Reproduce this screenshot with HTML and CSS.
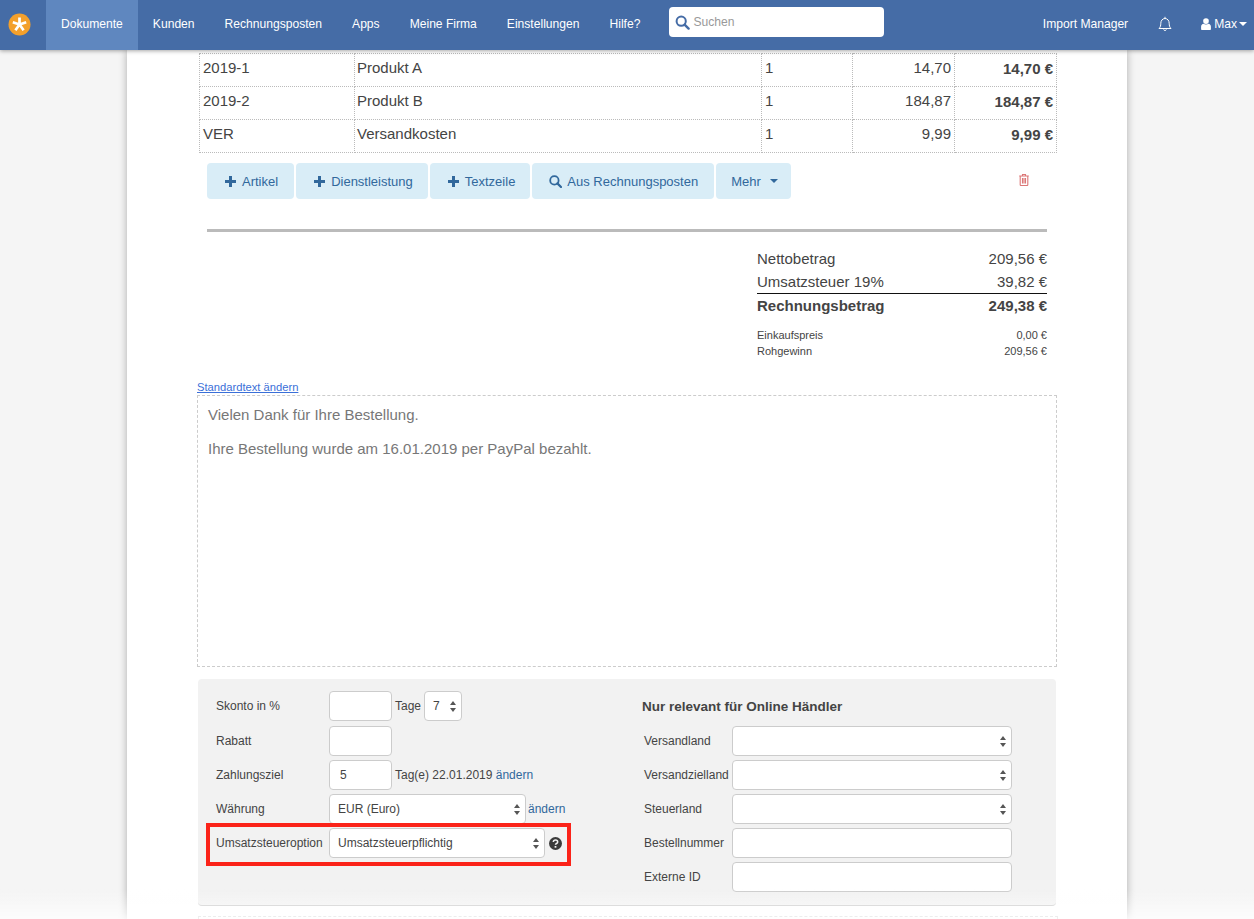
FILE: index.html
```html
<!DOCTYPE html>
<html lang="de">
<head>
    <meta charset="UTF-8">
    <title>Rechnung bearbeiten</title>
    <link rel="stylesheet" href="styles.css">
</head>
<body>

    <!-- Top navigation -->
    <nav class="navbar">
        <a class="logo" href="#">
            <svg width="23" height="23" viewBox="0 0 23 23">
                <circle cx="11.500" cy="11.500" r="11" fill="#f3a02c"/>
                <path d="M11.500 11.500V4.500M11.500 11.500L4.800 9.300M11.500 11.500L18.200 9.300M11.500 11.500L7.400 17.200M11.500 11.500L15.600 17.200" stroke="#fff" stroke-width="2.700" fill="none"/>
            </svg>
        </a>
        <a class="nav-item active" href="#">Dokumente</a>
        <a class="nav-item" href="#">Kunden</a>
        <a class="nav-item" href="#">Rechnungsposten</a>
        <a class="nav-item" href="#">Apps</a>
        <a class="nav-item" href="#">Meine Firma</a>
        <a class="nav-item" href="#">Einstellungen</a>
        <a class="nav-item" href="#">Hilfe?</a>
        <div class="search">
            <svg width="15" height="15" viewBox="0 0 15 15">
                <circle cx="6.200" cy="6.200" r="4.600" stroke="#456ca6" stroke-width="2" fill="none"/>
                <path d="M9.600 9.600l4 4" stroke="#456ca6" stroke-width="2.400" stroke-linecap="round"/>
            </svg>
            <span>Suchen</span>
        </div>
        <div class="nav-right">
            <a class="nav-link" href="#">Import Manager</a>
            <a class="nav-bell" href="#">
                <svg width="14" height="16" viewBox="0 0 14 16">
                    <path d="M1 12.500c1.400-1.300 1.800-3 1.800-5.200C2.800 4.600 4.600 2.500 7 2.500s4.200 2.100 4.200 4.800c0 2.200.4 3.900 1.800 5.200z" stroke="#fff" fill="none"/>
                    <path d="M5.600 13.500a1.500 1.500 0 0 0 2.800 0M7 .8v1.700" stroke="#fff" fill="none"/>
                </svg>
            </a>
            <a class="nav-user" href="#">
                <svg width="10" height="12" viewBox="0 0 9 11">
                    <circle cx="4.500" cy="2.800" r="2.600" fill="#fff"/>
                    <path d="M0 10.300V8c0-1.600 1-2.500 2.200-2.700.6.500 1.400.7 2.300.7s1.700-.2 2.300-.7C8 5.500 9 6.400 9 8v2.300c0 .4-.3.7-.7.7H.7c-.4 0-.7-.3-.7-.7z" fill="#fff"/>
                </svg>
                Max<span class="caret"></span>
            </a>
        </div>
    </nav>

    <div class="page">

        <!-- Line items -->
        <table class="items">
            <colgroup>
                <col class="col-number">
                <col class="col-name">
                <col class="col-qty">
                <col class="col-price">
                <col class="col-total">
            </colgroup>
            <tbody>
                <tr>
                    <td>2019-1</td>
                    <td class="name">Produkt A</td>
                    <td>1</td>
                    <td class="num">14,70</td>
                    <td class="num total">14,70 €</td>
                </tr>
                <tr>
                    <td>2019-2</td>
                    <td class="name">Produkt B</td>
                    <td>1</td>
                    <td class="num">184,87</td>
                    <td class="num total">184,87 €</td>
                </tr>
                <tr>
                    <td>VER</td>
                    <td class="name">Versandkosten</td>
                    <td>1</td>
                    <td class="num">9,99</td>
                    <td class="num total">9,99 €</td>
                </tr>
            </tbody>
        </table>

        <div class="toolbar">
            <button class="btn btn-first">
                <svg width="11" height="11" viewBox="0 0 11 11"><path d="M5.500 0v11M0 5.500h11" stroke="#31689c" stroke-width="3"/></svg>
                Artikel
            </button>
            <button class="btn">
                <svg width="11" height="11" viewBox="0 0 11 11"><path d="M5.500 0v11M0 5.500h11" stroke="#31689c" stroke-width="3"/></svg>
                Dienstleistung
            </button>
            <button class="btn">
                <svg width="11" height="11" viewBox="0 0 11 11"><path d="M5.500 0v11M0 5.500h11" stroke="#31689c" stroke-width="3"/></svg>
                Textzeile
            </button>
            <button class="btn btn-search">
                <svg width="13" height="13" viewBox="0 0 13 13">
                    <circle cx="5.400" cy="5.400" r="4.200" stroke="#31689c" stroke-width="1.800" fill="none"/>
                    <path d="M8.400 8.400l3.600 3.600" stroke="#31689c" stroke-width="2.200" stroke-linecap="round"/>
                </svg>
                Aus Rechnungsposten
            </button>
            <button class="btn btn-more">Mehr <span class="caret caret-blue"></span></button>
            <svg class="trash" width="10" height="12" viewBox="0 0 10 12">
                <path d="M3.500 1.500V.5h3v1M.2 2h9.600M1.200 2v8.800c0 .4.300.7.700.7h6.200c.4 0 .7-.3.700-.7V2M3.500 4v5.500M5 4v5.500M6.500 4v5.500" stroke="#dc7777" stroke-width="1.100" fill="none"/>
            </svg>
        </div>

        <hr class="rule">

        <!-- Totals -->
        <div class="totals">
            <div class="total-row"><span>Nettobetrag</span><span>209,56 €</span></div>
            <div class="total-row tax"><span>Umsatzsteuer 19%</span><span>39,82 €</span></div>
            <div class="total-row grand"><span>Rechnungsbetrag</span><span>249,38 €</span></div>
            <div class="total-row small first"><span>Einkaufspreis</span><span>0,00 €</span></div>
            <div class="total-row small"><span>Rohgewinn</span><span>209,56 €</span></div>
        </div>

        <a class="text-link" href="#">Standardtext ändern</a>
        <div class="text-box">
            <p>Vielen Dank für Ihre Bestellung.</p>
            <p>Ihre Bestellung wurde am 16.01.2019 per PayPal bezahlt.</p>
        </div>

        <!-- Options panel -->
        <div class="panel">
            <div class="panel-left">
                <div class="form-row first">
                    <label>Skonto in %</label>
                    <input type="text" class="short">
                    <span class="after">Tage</span>
                    <select class="tiny"><option>7</option></select>
                </div>
                <div class="form-row">
                    <label>Rabatt</label>
                    <input type="text" class="short">
                </div>
                <div class="form-row">
                    <label>Zahlungsziel</label>
                    <input type="text" class="short" value="5">
                    <span class="after">Tag(e) 22.01.2019 <a href="#">ändern</a></span>
                </div>
                <div class="form-row">
                    <label>Währung</label>
                    <select class="medium"><option>EUR (Euro)</option></select>
                    <a class="after-link" href="#">ändern</a>
                </div>
                <div class="form-row marked">
                    <label>Umsatzsteueroption</label>
                    <select class="wide"><option>Umsatzsteuerpflichtig</option></select>
                    <svg class="help" width="13" height="13" viewBox="0 0 13 13">
                        <circle cx="6.500" cy="6.500" r="6.500" fill="#3a3a3a"/>
                        <path d="M4.300 5c.1-1.300 1-1.900 2.200-1.900s2.200.7 2.200 1.800c0 1.700-2.200 1.500-2.200 2.900" stroke="#f2f2f2" stroke-width="1.500" fill="none"/>
                        <rect x="5.600" y="9" width="1.800" height="1.700" fill="#f2f2f2"/>
                    </svg>
                </div>
            </div>
            <div class="panel-right">
                <h3>Nur relevant für Online Händler</h3>
                <div class="form-row">
                    <label>Versandland</label>
                    <select class="full"><option></option></select>
                </div>
                <div class="form-row">
                    <label>Versandzielland</label>
                    <select class="full"><option></option></select>
                </div>
                <div class="form-row">
                    <label>Steuerland</label>
                    <select class="full"><option></option></select>
                </div>
                <div class="form-row">
                    <label>Bestellnummer</label>
                    <input type="text" class="full">
                </div>
                <div class="form-row">
                    <label>Externe ID</label>
                    <input type="text" class="full">
                </div>
            </div>
        </div>

        <div class="next-box"></div>
    </div>

    <div class="bottom-fade"></div>

</body>
</html>
```

FILE: styles.css
```css
html, body {
    height: 100%;
    overflow: hidden;
}
body {
    font-family: "Liberation Sans", Arial, sans-serif;
    font-size: 14px;
    background-color: #f5f5f5;
    color: #444;
    margin: 0;
}
a {
    color: #31689c;
    text-decoration: none;
}

/* Navbar */
.navbar {
    position: relative;
    z-index: 2;
    display: flex;
    align-items: stretch;
    height: 50px;
    background-color: #456ca6;
    box-shadow: 0 1px 4px rgba(0, 0, 0, 0.35);
    font-size: 12.1px;
}
.navbar a {
    color: #fff;
}
.logo {
    display: flex;
    align-items: center;
    width: 46px;
    padding: 0 0 2px 8px;
    box-sizing: border-box;
}
.nav-item {
    display: flex;
    align-items: center;
    padding: 0 15px 2px;
}
.nav-item.active {
    background-color: #5f87bf;
}
.search {
    display: flex;
    align-items: center;
    gap: 3px;
    align-self: flex-start;
    width: 215px;
    height: 30px;
    margin: 7px 0 0 14px;
    padding-left: 6px;
    box-sizing: border-box;
    background-color: #fff;
    border-radius: 4px;
    color: #999;
}
.nav-right {
    display: flex;
    align-items: center;
    margin-left: auto;
    padding: 0 7px 2px 0;
}
.nav-bell {
    display: flex;
    margin-left: 30px;
}
.nav-user {
    display: flex;
    align-items: center;
    gap: 3px;
    margin-left: 29px;
}
.caret {
    display: inline-block;
    border-top: 4px solid #fff;
    border-left: 4px solid transparent;
    border-right: 4px solid transparent;
    margin-left: -1px;
}
.caret.caret-blue {
    border-top-color: #31689c;
    margin-left: 3px;
    vertical-align: middle;
}

/* Page sheet */
.page {
    width: 1000px;
    height: 869px;
    margin-left: 127px;
    padding: 3px 70px 0;
    box-sizing: border-box;
    background-color: #fff;
    box-shadow: 0 0 8px rgba(0, 0, 0, 0.3);
}

/* Line items */
.items {
    width: 857px;
    margin-left: 2px;
    table-layout: fixed;
    border-collapse: collapse;
    font-size: 15px;
}
.items td {
    height: 33px;
    padding: 0 3px 6px 3px;
    box-sizing: border-box;
    border: 1px dotted #bbb;
}
.col-number { width: 155px; }
.col-name { width: 407px; }
.col-qty { width: 91px; }
.col-price { width: 102px; }
.col-total { width: 102px; }
.items td.name {
    padding-left: 2px;
}
.items td.num {
    text-align: right;
}
.items td.total {
    padding-bottom: 4px;
    font-weight: bold;
}

/* Action buttons */
.toolbar {
    display: flex;
    align-items: center;
    gap: 2px;
    margin: 10px 0 0 10px;
    width: 840px;
}
.btn {
    display: flex;
    align-items: center;
    gap: 6px;
    height: 36px;
    padding: 0 15px 0 18px;
    border: none;
    border-radius: 4px;
    background-color: #d9edf7;
    color: #31689c;
    font-family: inherit;
    font-size: 13px;
}
.btn-first {
    padding-right: 16px;
}
.btn-search {
    padding-left: 17px;
    padding-right: 16px;
    gap: 5px;
}
.btn-more {
    padding: 0 13px 0 15px;
}
.trash {
    margin: 0 18px 2px auto;
}
.rule {
    width: 840px;
    height: 3px;
    margin: 30px 0 0 10px;
    border: none;
    background-color: #bbb;
}

/* Totals */
.totals {
    width: 290px;
    margin: 17px 0 0 560px;
    font-size: 15px;
}
.total-row {
    display: flex;
    justify-content: space-between;
    height: 23px;
    line-height: 20px;
}
.total-row.tax {
    height: 21px;
    border-bottom: 1px solid #111;
}
.total-row.grand {
    height: 26px;
    line-height: 24px;
    font-weight: bold;
}
.total-row.small {
    height: 16px;
    line-height: 16px;
    font-size: 11px;
}
.total-row.first {
    margin-top: 7px;
}

/* Standard text */
.text-link {
    display: block;
    margin-top: 19px;
    height: 17px;
    line-height: 18px;
    font-size: 11.2px;
    color: #3a6fd8;
    text-decoration: underline;
}
.text-box {
    height: 272px;
    padding: 11px 10px;
    box-sizing: border-box;
    border: 1px dashed #ccc;
    color: #777;
    font-size: 15px;
}
.text-box p {
    margin: 0 0 18px;
    line-height: 16px;
}

/* Options panel */
.panel {
    display: flex;
    width: 858px;
    height: 227px;
    margin: 12px 0 0 1px;
    padding: 12px 0 0 18px;
    box-sizing: border-box;
    background-color: #f2f2f2;
    border-bottom: 1px solid #c8c8c8;
    border-radius: 4px;
    font-size: 12px;
}
.panel-left {
    width: 426px;
    padding-top: 35px;
}
.panel-left .first {
    margin-top: -35px;
    margin-bottom: 5px;
}
.panel-right h3 {
    height: 35px;
    margin: 0;
    font-size: 13.5px;
    line-height: 32px;
}
.panel-right label {
    width: 88px;
    margin-left: 2px;
}
.form-row {
    position: relative;
    display: flex;
    align-items: center;
    height: 30px;
    margin-bottom: 4px;
}
.form-row label {
    flex: none;
}
.panel-left label {
    width: 113px;
}
.after {
    margin-left: 3px;
}
.after-link {
    margin-left: 2px;
}
.panel input, .panel select {
    height: 30px;
    padding: 0 8px;
    box-sizing: border-box;
    border: 1px solid #ccc;
    border-radius: 4px;
    background-color: #fff;
    color: #444;
    font-family: inherit;
    font-size: 12px;
}
.panel select {
    appearance: none;
    -webkit-appearance: none;
    background-image: url("data:image/svg+xml,%3Csvg xmlns='http://www.w3.org/2000/svg' width='6' height='11'%3E%3Cpath d='M3 0l3 4H0zM3 11L0 7h6z' fill='%23555'/%3E%3C/svg%3E");
    background-repeat: no-repeat;
    background-position: right 5px center;
}
.short {
    width: 63px;
}
.panel input.short {
    padding-left: 10px;
}
.panel select.tiny {
    width: 38px;
    margin-left: 3px;
}
.medium {
    width: 197px;
}
.wide {
    width: 216px;
}
.full {
    width: 280px;
}
.help {
    margin-left: 4px;
}

/* Red annotation round the tax option */
.marked::after {
    content: "";
    position: absolute;
    left: -10px;
    top: -5px;
    width: 365px;
    height: 43px;
    box-sizing: border-box;
    border: 4px solid #fb2319;
}
.next-box {
    width: 858px;
    height: 20px;
    margin: 10px 0 0 1px;
    border: 1px dashed #ccc;
}

/* Fade over the last lines of the window */
.bottom-fade {
    position: fixed;
    left: 0;
    right: 0;
    bottom: 0;
    height: 30px;
    background: linear-gradient(rgba(255, 255, 255, 0), rgba(255, 255, 255, 0.7));
    pointer-events: none;
}
```
